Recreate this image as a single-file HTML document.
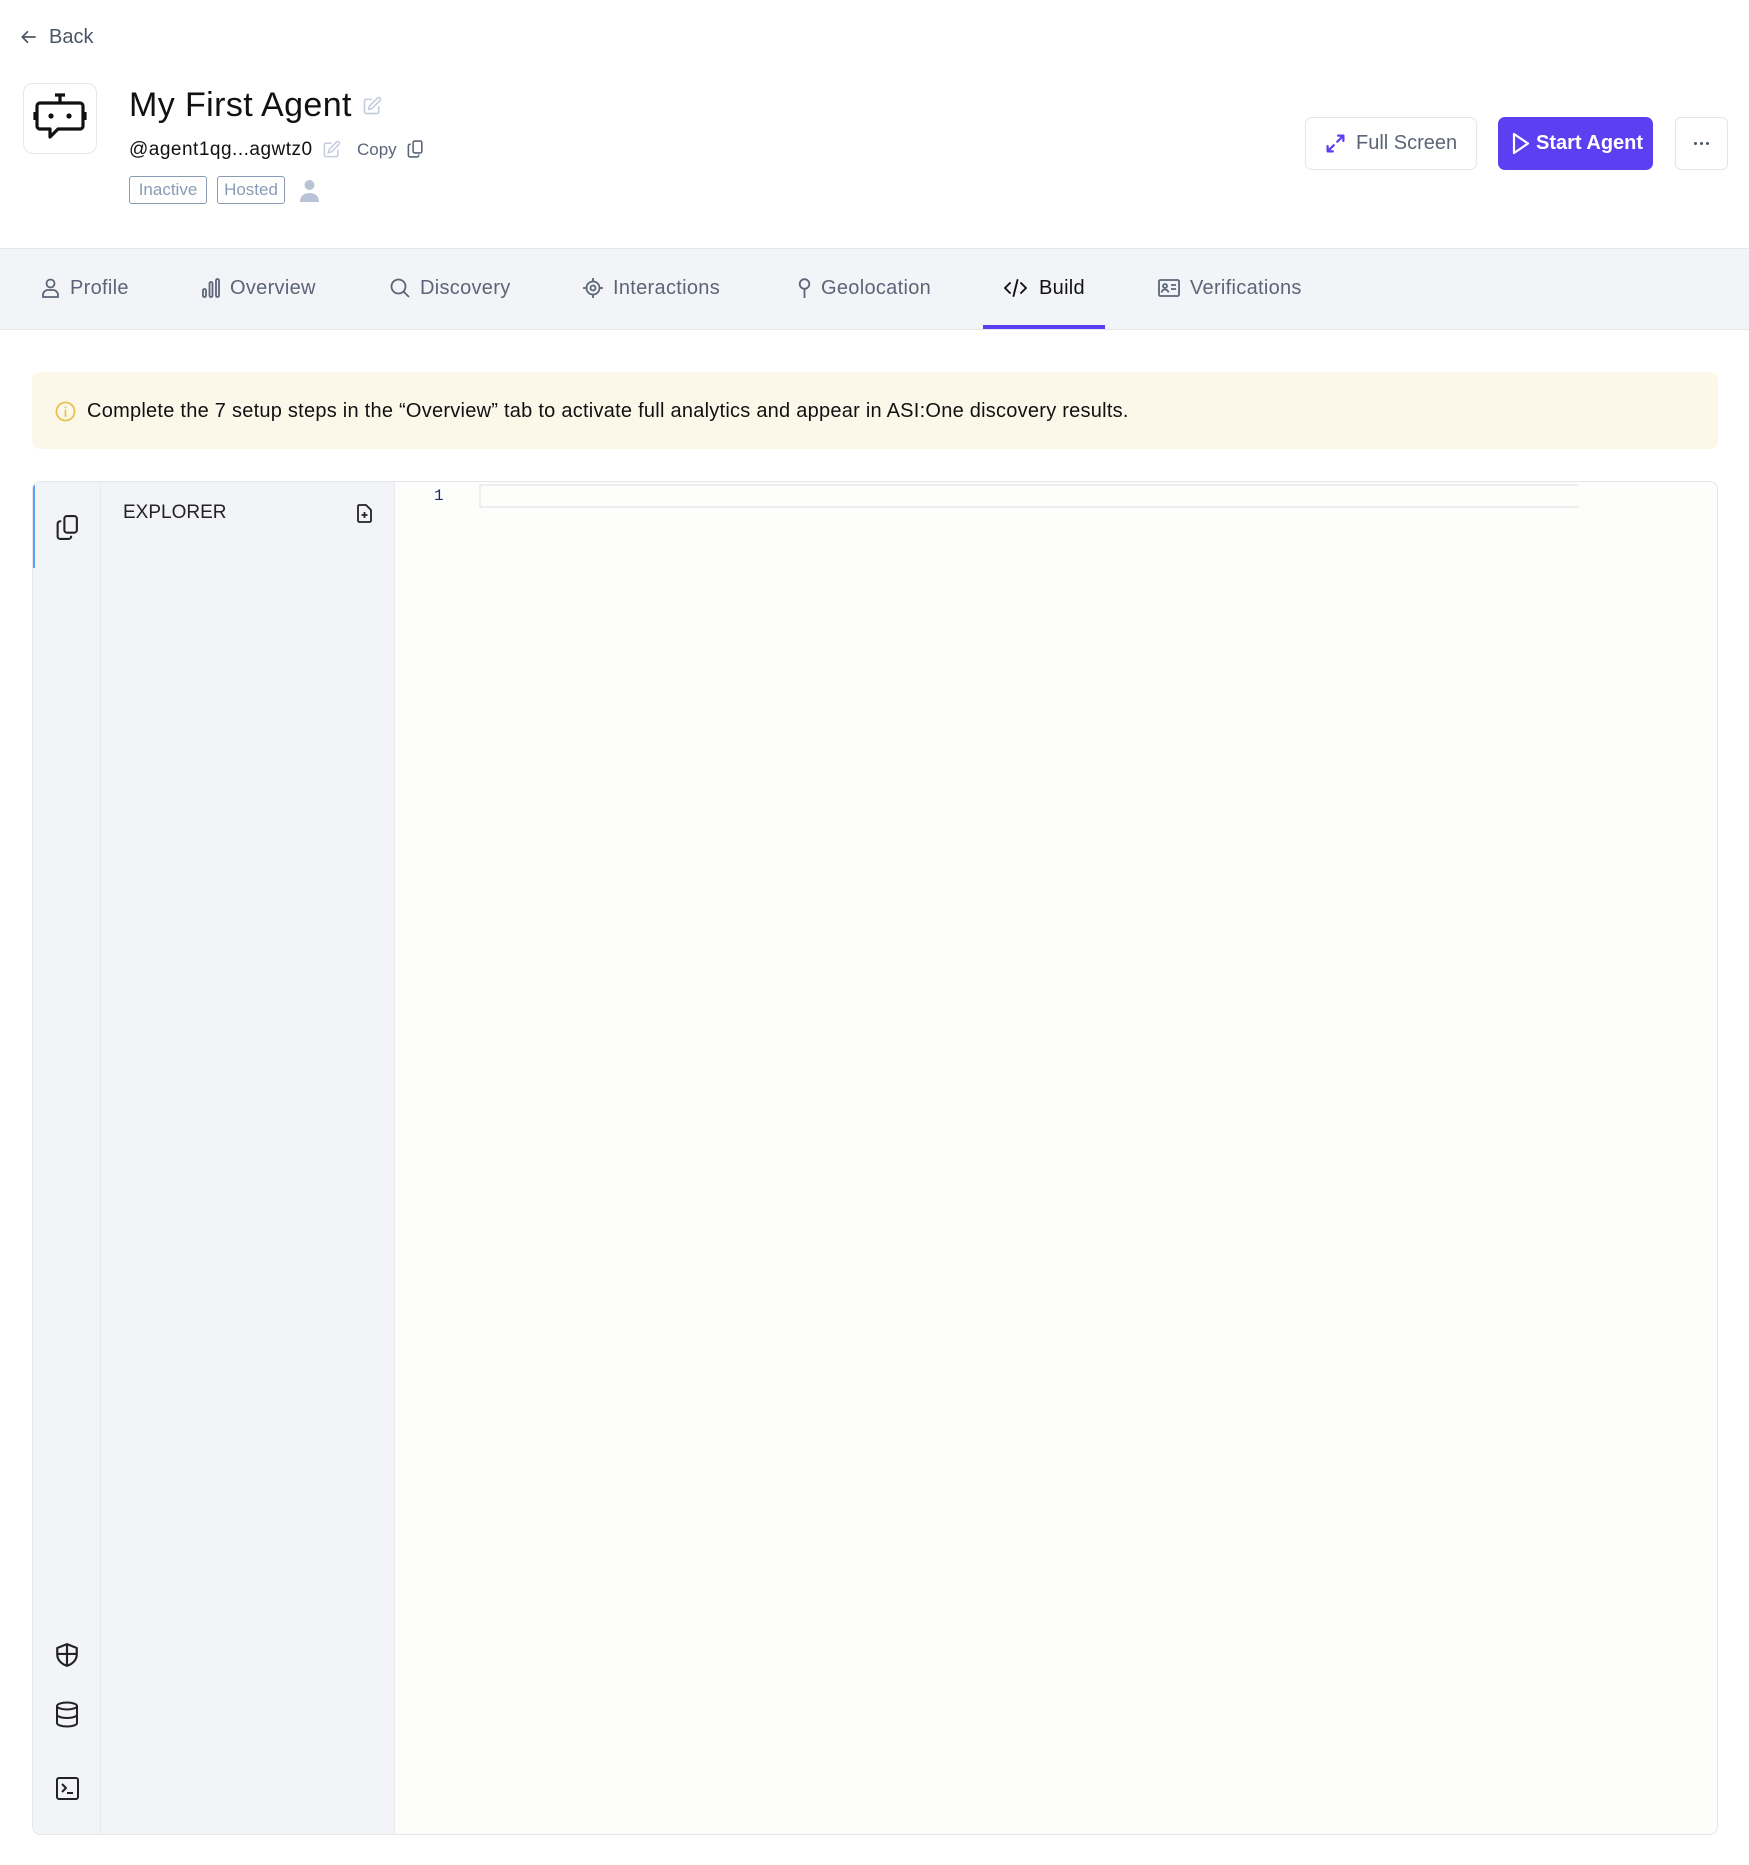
<!DOCTYPE html>
<html><head><meta charset="utf-8"><style>
*{box-sizing:border-box;margin:0;padding:0}
body{width:1749px;height:1865px;background:#fff;font-family:"Liberation Sans",sans-serif;position:relative;overflow:hidden;color:#111}
.a{position:absolute}
.tab{position:absolute;top:276px;font-size:20px;color:#5b6577;line-height:24px;white-space:nowrap;letter-spacing:0.3px}
.ti{position:absolute;top:278px}
svg{display:block}
</style></head><body>
<svg class="a" style="left:20px;top:28px" width="18" height="18" viewBox="0 0 24 24" fill="none" stroke="#4b5563" stroke-width="2.2" stroke-linecap="round" stroke-linejoin="round"><path d="M20 12H4M10 5l-7 7 7 7"/></svg>
<div class="a" style="left:49px;top:26px;font-size:20px;color:#4b5563">Back</div>
<div class="a" style="left:23px;top:83px;width:74px;height:71px;border:1px solid #e5e7eb;border-radius:10px"></div>
<svg class="a" style="left:31px;top:92px" width="58" height="56" viewBox="0 0 58 56" fill="none" stroke="#111" stroke-width="3.2" stroke-linejoin="round"><path d="M24 3h10M29 3v7"/><path d="M9 11h40a3 3 0 0 1 3 3v20a3 3 0 0 1-3 3H27l-8 8v-8h-10a3 3 0 0 1-3-3V14a3 3 0 0 1 3-3z"/><path d="M4 20v8M54 20v8"/><circle cx="20" cy="24" r="2.6" fill="#111" stroke="none"/><circle cx="38" cy="24" r="2.6" fill="#111" stroke="none"/></svg>
<div class="a" style="left:129px;top:85px;font-size:34px;color:#111;line-height:40px;letter-spacing:0.4px">My First Agent</div>
<svg class="a" style="left:362px;top:96px" width="20" height="20" viewBox="0 0 24 24" fill="none" stroke="#c5cde0" stroke-width="2" stroke-linecap="round"><path d="M11 4H5a2 2 0 0 0-2 2v13a2 2 0 0 0 2 2h13a2 2 0 0 0 2-2v-6"/><path d="M18.5 2.5a2.1 2.1 0 0 1 3 3L12 15l-4 1 1-4z"/></svg>
<div class="a" style="left:129px;top:139px;font-size:19px;color:#111;line-height:22px;letter-spacing:0.5px">@agent1qg...agwtz0</div>
<svg class="a" style="left:322px;top:140px" width="19" height="19" viewBox="0 0 24 24" fill="none" stroke="#c5cde0" stroke-width="2" stroke-linecap="round"><path d="M11 4H5a2 2 0 0 0-2 2v13a2 2 0 0 0 2 2h13a2 2 0 0 0 2-2v-6"/><path d="M18.5 2.5a2.1 2.1 0 0 1 3 3L12 15l-4 1 1-4z"/></svg>
<div class="a" style="left:357px;top:140px;font-size:17px;color:#5b6577">Copy</div>
<svg class="a" style="left:406px;top:139px" width="19" height="20" viewBox="0 0 24 24" fill="none" stroke="#5b6577" stroke-width="2" stroke-linejoin="round"><rect x="9" y="2" width="11" height="15" rx="2"/><path d="M6 6H5a2 2 0 0 0-2 2v12a2 2 0 0 0 2 2h9a2 2 0 0 0 2-2v-1"/></svg>
<div class="a" style="left:129px;top:176px;width:78px;height:28px;border:1.5px solid #8a9bb5;border-radius:3px;font-size:17px;color:#8a9bb5;text-align:center;line-height:25px">Inactive</div>
<div class="a" style="left:217px;top:176px;width:68px;height:28px;border:1.5px solid #8a9bb5;border-radius:3px;font-size:17px;color:#8a9bb5;text-align:center;line-height:25px">Hosted</div>
<svg class="a" style="left:299px;top:179px" width="21" height="24" viewBox="0 0 21 24" fill="#b9c3d6"><circle cx="10.5" cy="6" r="5"/><path d="M1 23c0-6 4-9 9.5-9S20 17 20 23z"/></svg>
<div class="a" style="left:1305px;top:117px;width:172px;height:53px;border:1px solid #e2e5ea;border-radius:7px"></div>
<svg class="a" style="left:1325px;top:133px" width="21" height="21" viewBox="0 0 24 24" fill="none" stroke="#5b3ff0" stroke-width="2.6" stroke-linecap="round" stroke-linejoin="round"><path d="M14 10l7-7M15 3h6v6M10 14l-7 7M3 15v6h6"/></svg>
<div class="a" style="left:1356px;top:132px;font-size:20px;color:#5b6577">Full Screen</div>
<div class="a" style="left:1498px;top:117px;width:155px;height:53px;background:#5b3ff0;border-radius:7px"></div>
<svg class="a" style="left:1511px;top:132px" width="20" height="23" viewBox="0 0 20 23" fill="none" stroke="#fff" stroke-width="2.2" stroke-linejoin="round"><path d="M3 2l14 9.5L3 21z"/></svg>
<div class="a" style="left:1536px;top:132px;font-size:20px;color:#fff;font-weight:bold">Start Agent</div>
<div class="a" style="left:1675px;top:117px;width:53px;height:53px;border:1px solid #e2e5ea;border-radius:6px"></div>
<div class="a" style="left:1694px;top:142px;width:3px;height:3px;background:#4b5563;border-radius:50%;box-shadow:6px 0 #4b5563,12px 0 #4b5563"></div>
<div class="a" style="left:0;top:248px;width:1749px;height:82px;background:#f3f4f8;border-top:1px solid #e5e7eb;border-bottom:1px solid #e5e7eb"></div>
<svg class="ti" style="left:42px" width="17" height="20" viewBox="0 0 17 20" fill="none" stroke="#5b6577" stroke-width="1.8"><circle cx="8.5" cy="5.5" r="4"/><path d="M1 19v-2a5 5 0 0 1 5-5h5a5 5 0 0 1 5 5v2z"/></svg>
<div class="tab" style="left:70px">Profile</div>
<svg class="ti" style="left:202px" width="18" height="20" viewBox="0 0 18 20" fill="none" stroke="#5b6577" stroke-width="1.8"><rect x="1" y="11" width="3" height="8" rx="1.5"/><rect x="7.5" y="4" width="3" height="15" rx="1.5"/><rect x="14" y="1" width="3" height="18" rx="1.5"/></svg>
<div class="tab" style="left:230px">Overview</div>
<svg class="ti" style="left:390px" width="20" height="20" viewBox="0 0 20 20" fill="none" stroke="#5b6577" stroke-width="1.8"><circle cx="8.5" cy="8.5" r="7"/><path d="M13.5 13.5L19 19"/></svg>
<div class="tab" style="left:420px">Discovery</div>
<svg class="ti" style="left:583px" width="20" height="20" viewBox="0 0 20 20" fill="none" stroke="#5b6577" stroke-width="1.8"><circle cx="10" cy="10" r="6.5"/><circle cx="10" cy="10" r="2.5"/><path d="M10 0v3.5M10 16.5V20M0 10h3.5M16.5 10H20"/></svg>
<div class="tab" style="left:613px">Interactions</div>
<svg class="ti" style="left:798px" width="13" height="21" viewBox="0 0 13 21" fill="none" stroke="#5b6577" stroke-width="1.8"><circle cx="6.5" cy="6" r="4.8"/><path d="M6.5 11v9"/></svg>
<div class="tab" style="left:821px">Geolocation</div>
<svg class="ti" style="left:1003px" width="25" height="20" viewBox="0 0 25 20" fill="none" stroke="#111" stroke-width="1.9" stroke-linecap="round" stroke-linejoin="round"><path d="M7 5l-5 5 5 5M18 5l5 5-5 5M14.5 2l-4 16"/></svg>
<div class="tab" style="left:1039px;color:#111">Build</div>
<div class="a" style="left:983px;top:325px;width:122px;height:4px;background:#5b3ff0"></div>
<svg class="ti" style="left:1158px" width="22" height="20" viewBox="0 0 22 20" fill="none" stroke="#5b6577" stroke-width="1.8"><rect x="1" y="2" width="20" height="16" rx="1.5"/><circle cx="7" cy="8" r="2"/><path d="M3.5 14.5c.5-2 2-3 3.5-3s3 1 3.5 3M13 7h5M13 11h5"/></svg>
<div class="tab" style="left:1190px">Verifications</div>
<div class="a" style="left:32px;top:372px;width:1686px;height:77px;background:#fbf8ea;border-radius:8px"></div>
<svg class="a" style="left:55px;top:401px" width="21" height="21" viewBox="0 0 22 22" fill="none" stroke="#e8c04a" stroke-width="1.8"><circle cx="11" cy="11" r="9.5"/><path d="M11 10v6M11 6.5v.5" stroke-linecap="round"/></svg>
<div class="a" style="left:87px;top:400px;font-size:20px;color:#111;line-height:23px;letter-spacing:0.25px">Complete the 7 setup steps in the “Overview” tab to activate full analytics and appear in ASI:One discovery results.</div>
<div class="a" style="left:32px;top:481px;width:1686px;height:1354px;border:1.5px solid #e5e7eb;border-radius:8px;background:#fdfdfb;overflow:hidden">
 <div class="a" style="left:0;top:0;width:68px;height:1354px;background:#f3f4f8;border-right:1px solid #e8eaee"></div>
 <div class="a" style="left:68px;top:0;width:294px;height:1354px;background:#f3f4f8;border-right:1px solid #e8eaee"></div>
 <div class="a" style="left:0;top:3px;width:2px;height:83px;background:#5b9ef5"></div>
</div>
<svg class="a" style="left:55px;top:514px" width="25" height="27" viewBox="0 0 24 26" fill="none" stroke="#222" stroke-width="2" stroke-linejoin="round"><rect x="9" y="2" width="12" height="16" rx="2.5"/><path d="M6 7H5a2.5 2.5 0 0 0-2.5 2.5v12A2.5 2.5 0 0 0 5 24h8a2.5 2.5 0 0 0 2.5-2.5V21"/></svg>
<div class="a" style="left:123px;top:502px;font-size:19px;color:#222;line-height:22px">EXPLORER</div>
<svg class="a" style="left:357px;top:504px" width="15" height="19" viewBox="0 0 15 19" fill="none" stroke="#222" stroke-width="1.8" stroke-linejoin="round"><path d="M2 1h7l5 5v10.5a1.5 1.5 0 0 1-1.5 1.5h-10A1.5 1.5 0 0 1 1 16.5v-14A1.5 1.5 0 0 1 2 1z"/><path d="M7.5 8v6M4.5 11h6"/></svg>
<div class="a" style="left:479px;top:484px;width:1100px;height:24px;border-top:2px solid #eeeeee;border-bottom:2px solid #eeeeee;border-left:2px solid #eeeeee"></div>
<div class="a" style="left:434px;top:487px;font-family:'Liberation Mono',monospace;font-size:16px;color:#1f2a6b">1</div>
<svg class="a" style="left:54px;top:1642px" width="26" height="26" viewBox="0 0 24 24" fill="none" stroke="#222" stroke-width="2" stroke-linejoin="round"><path d="M12 2l9 3.5v6c0 5-4 9-9 10.5C7 20.5 3 16.5 3 11.5v-6z"/><path d="M12 2v20M3 11h18"/></svg>
<svg class="a" style="left:55px;top:1701px" width="24" height="27" viewBox="0 0 24 27" fill="none" stroke="#222" stroke-width="2"><ellipse cx="12" cy="5" rx="10" ry="3.5"/><path d="M2 5v17c0 2 4.5 3.5 10 3.5s10-1.5 10-3.5V5M2 13.5c0 2 4.5 3.5 10 3.5s10-1.5 10-3.5"/></svg>
<svg class="a" style="left:56px;top:1777px" width="23" height="23" viewBox="0 0 23 23" fill="none" stroke="#222" stroke-width="2" stroke-linejoin="round"><rect x="1" y="1" width="21" height="21" rx="2"/><path d="M6 7l4 4-4 4M11 16h6"/></svg>
</body></html>
